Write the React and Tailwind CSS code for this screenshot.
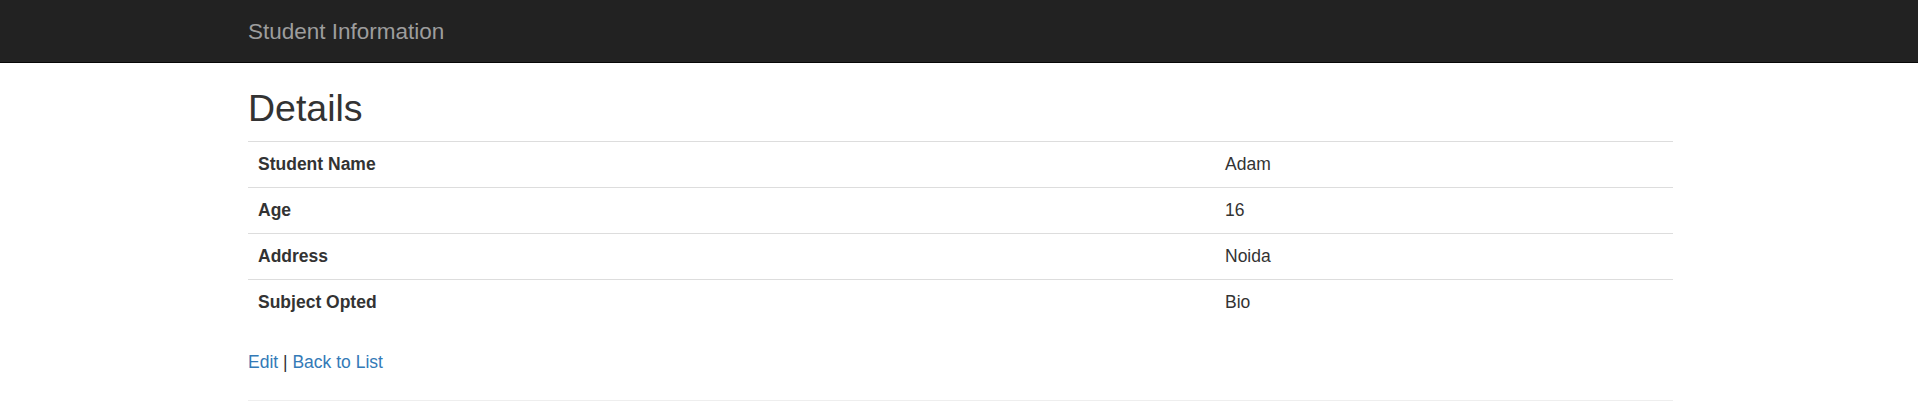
const rows = [
  { label: 'Student Name', value: 'Adam' },
  { label: 'Age', value: '16' },
  { label: 'Address', value: 'Noida' },
  { label: 'Subject Opted', value: 'Bio' },
]

export default function App() {
  return (
    <div className="min-h-screen bg-white text-[#333] font-['Liberation_Sans',Arial,sans-serif] text-[17.5px] leading-[25px]">
      {/* Navbar */}
      <div className="h-[63px] bg-[#222] border-b border-[#080808] pl-[3px]">
        <div className="w-[1425px] mx-auto pt-[18.5px]">
          <a className="text-[22.5px] leading-[25px] text-[#9d9d9d]">Student Information</a>
        </div>
      </div>

      {/* Body */}
      <div className="pl-[3px]">
        <div className="w-[1425px] mx-auto">
          <h2 className="mt-[24.5px] mb-[12.5px] text-[37.5px] leading-[41.25px] font-normal text-[#333]">Details</h2>
          <table className="w-full border-collapse mb-[25px]">
            <tbody>
              {rows.map(r => (
                <tr key={r.label} className="border-t border-[#ddd]">
                  <td className="w-[967px] p-[10px] font-bold align-top">{r.label}</td>
                  <td className="p-[10px] align-top">{r.value}</td>
                </tr>
              ))}
            </tbody>
          </table>
          <p className="mb-[12.5px]">
            <a className="text-[#337ab7]">Edit</a> | <a className="text-[#337ab7]">Back to List</a>
          </p>
          <hr className="mt-[25px] border-0 border-t border-[#eee]" />
        </div>
      </div>
    </div>
  )
}
